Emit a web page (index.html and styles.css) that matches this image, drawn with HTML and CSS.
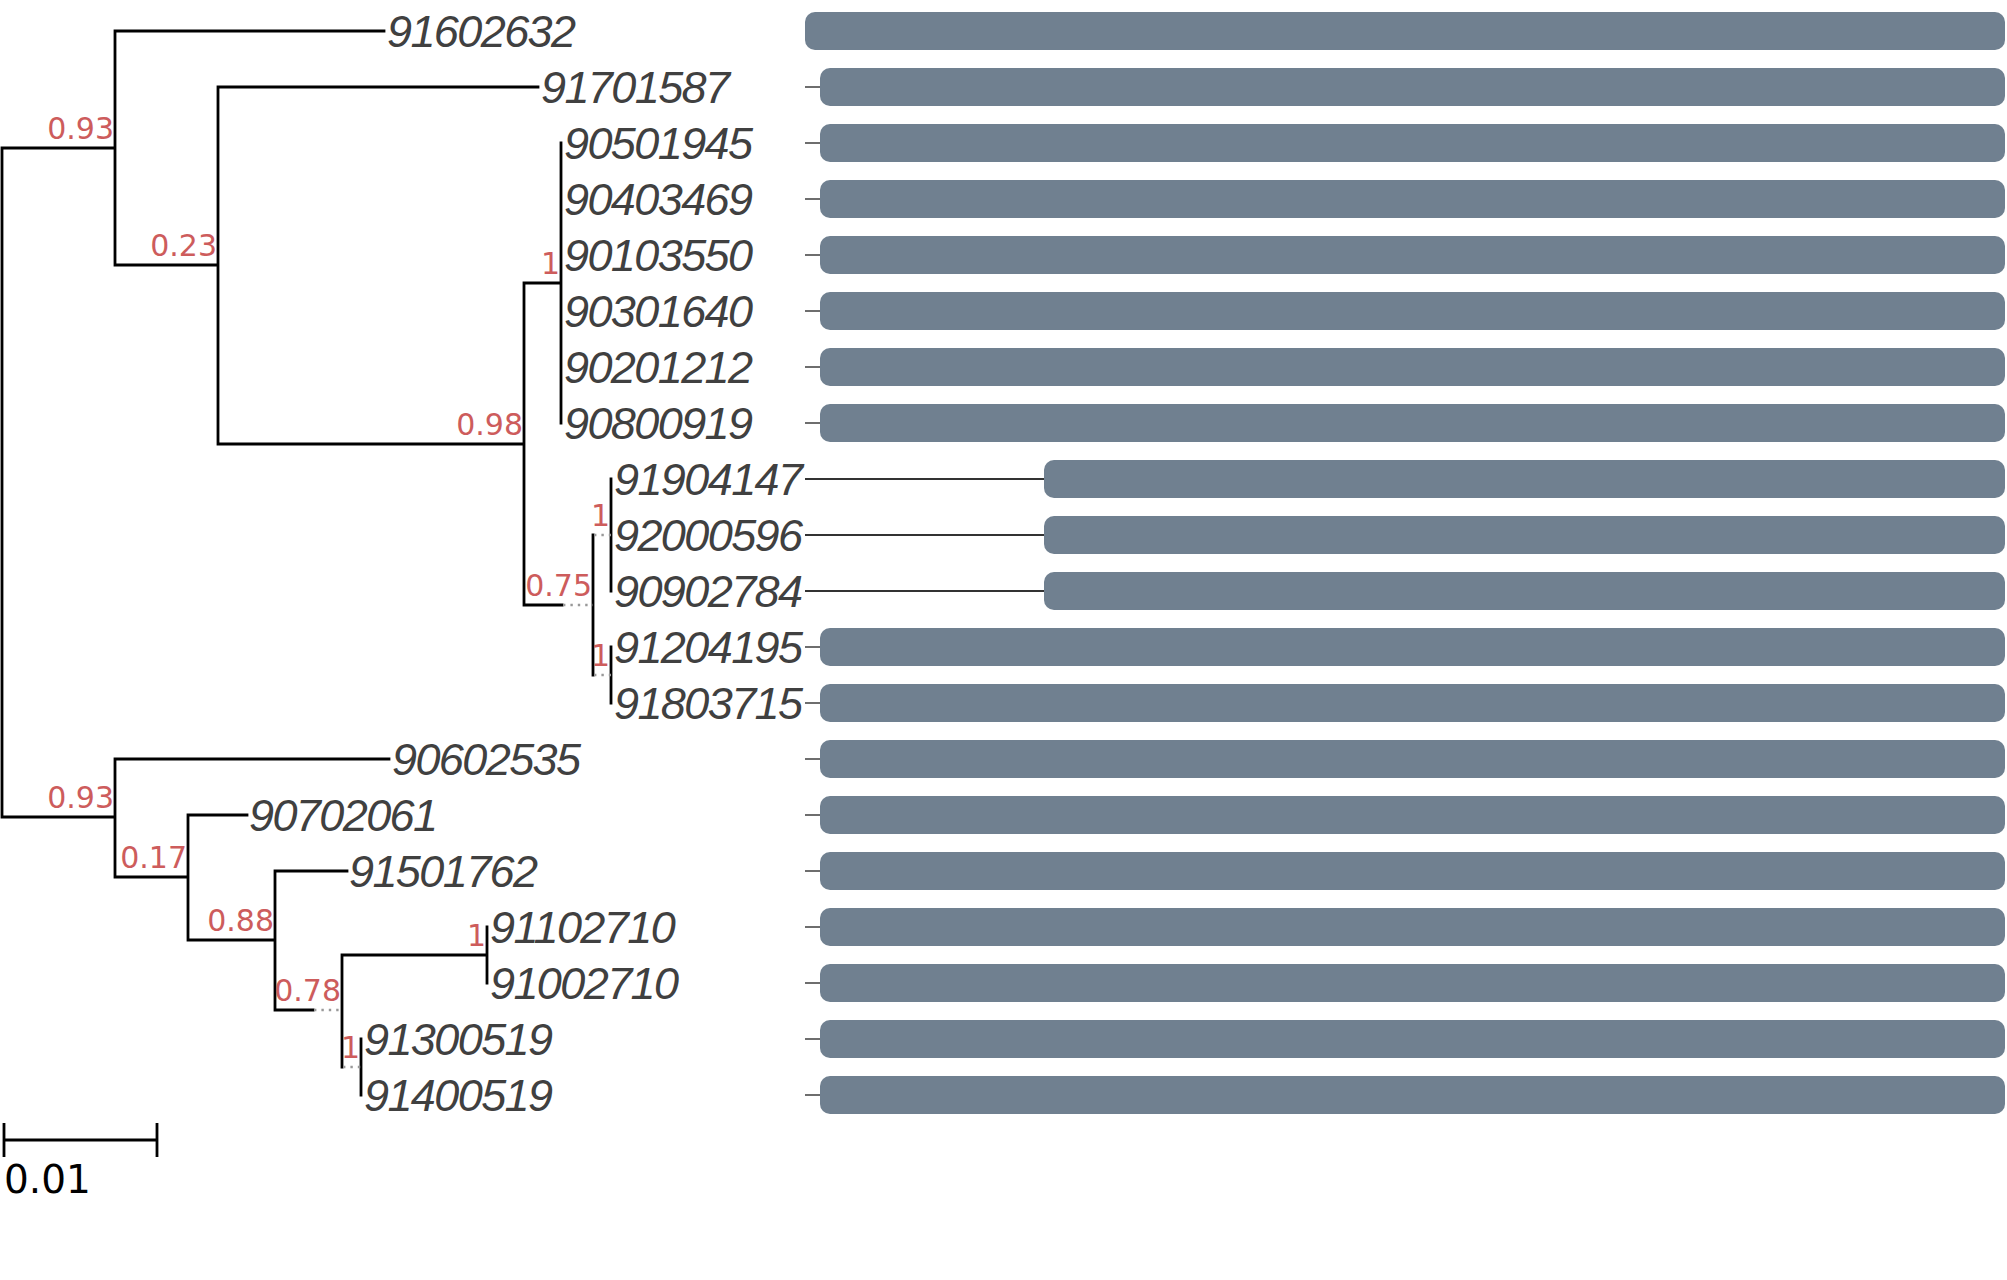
FILE: index.html
```html
<!DOCTYPE html>
<html>
<head>
<meta charset="utf-8">
<link rel="stylesheet" href="styles.css">
</head>
<body>
<div class="figure">
  <svg class="tree" width="805" height="1280" viewBox="0 0 805 1280">
    <path class="branch" d="M2 148 V817 M2 148 H115 M2 817 H115
      M115 31 V265 M115 31 H384 M115 265 H218
      M218 87 V444 M218 87 H538 M218 444 H524
      M524 283 V605 M524 283 H561 M524 605 H562
      M561 143 V423
      M593 535 V675
      M611 479 V591
      M611 647 V703
      M115 759 V877 M115 759 H389 M115 877 H188
      M188 815 V940 M188 815 H247 M188 940 H275
      M275 871 V1010 M275 871 H347 M275 1010 H313
      M342 955 V1067 M342 955 H487
      M487 927 V983
      M361 1039 V1095"/>
    <path class="dots" d="M563 605 H593 M594 535 H611 M594 675 H611 M314 1010 H342 M343 1067 H361"/>
    <path class="scale" d="M4 1140 H157 M4 1123 V1157 M157 1123 V1157"/>

    <text class="leaf" x="387" y="47">91602632</text>
    <text class="leaf" x="541" y="103">91701587</text>
    <text class="leaf" x="564" y="159">90501945</text>
    <text class="leaf" x="564" y="215">90403469</text>
    <text class="leaf" x="564" y="271">90103550</text>
    <text class="leaf" x="564" y="327">90301640</text>
    <text class="leaf" x="564" y="383">90201212</text>
    <text class="leaf" x="564" y="439">90800919</text>
    <text class="leaf" x="614" y="495">91904147</text>
    <text class="leaf" x="614" y="551">92000596</text>
    <text class="leaf" x="614" y="607">90902784</text>
    <text class="leaf" x="614" y="663">91204195</text>
    <text class="leaf" x="614" y="719">91803715</text>
    <text class="leaf" x="392" y="775">90602535</text>
    <text class="leaf" x="249" y="831">90702061</text>
    <text class="leaf" x="349" y="887">91501762</text>
    <text class="leaf" x="490" y="943">91102710</text>
    <text class="leaf" x="490" y="999">91002710</text>
    <text class="leaf" x="364" y="1055">91300519</text>
    <text class="leaf" x="364" y="1111">91400519</text>

    <text class="sup" x="114" y="139">0.93</text>
    <text class="sup" x="217" y="256">0.23</text>
    <text class="sup" x="523" y="435">0.98</text>
    <text class="sup" x="560" y="274">1</text>
    <text class="sup" x="592" y="596">0.75</text>
    <text class="sup" x="610" y="526">1</text>
    <text class="sup" x="610" y="666">1</text>
    <text class="sup" x="114" y="808">0.93</text>
    <text class="sup" x="187" y="868">0.17</text>
    <text class="sup" x="274" y="931">0.88</text>
    <text class="sup" x="341" y="1001">0.78</text>
    <text class="sup" x="486" y="946">1</text>
    <text class="sup" x="360" y="1058">1</text>

    <text class="scale-label" x="4" y="1193">0.01</text>
  </svg>

  <div class="tracks">
    <div class="track"><div class="bar"></div></div>
    <div class="track"><div class="stub"></div><div class="bar"></div></div>
    <div class="track"><div class="stub"></div><div class="bar"></div></div>
    <div class="track"><div class="stub"></div><div class="bar"></div></div>
    <div class="track"><div class="stub"></div><div class="bar"></div></div>
    <div class="track"><div class="stub"></div><div class="bar"></div></div>
    <div class="track"><div class="stub"></div><div class="bar"></div></div>
    <div class="track"><div class="stub"></div><div class="bar"></div></div>
    <div class="track"><div class="stub long"></div><div class="bar"></div></div>
    <div class="track"><div class="stub long"></div><div class="bar"></div></div>
    <div class="track"><div class="stub long"></div><div class="bar"></div></div>
    <div class="track"><div class="stub"></div><div class="bar"></div></div>
    <div class="track"><div class="stub"></div><div class="bar"></div></div>
    <div class="track"><div class="stub"></div><div class="bar"></div></div>
    <div class="track"><div class="stub"></div><div class="bar"></div></div>
    <div class="track"><div class="stub"></div><div class="bar"></div></div>
    <div class="track"><div class="stub"></div><div class="bar"></div></div>
    <div class="track"><div class="stub"></div><div class="bar"></div></div>
    <div class="track"><div class="stub"></div><div class="bar"></div></div>
    <div class="track"><div class="stub"></div><div class="bar"></div></div>
  </div>
</div>
</body>
</html>
```
FILE: styles.css
```css
html, body {
  margin: 0;
  padding: 0;
  background: #ffffff;
}

.figure {
  display: grid;
  grid-template-columns: 805px 1fr;
  width: 2007px;
  height: 1280px;
}

.tree {
  display: block;
  overflow: visible;
  position: relative;
  z-index: 1;
}

.branch {
  fill: none;
  stroke: #000000;
  stroke-width: 2.8;
  stroke-linecap: square;
}

.dots {
  fill: none;
  stroke: #999999;
  stroke-width: 2.4;
  stroke-dasharray: 2.4 5;
}

.scale {
  fill: none;
  stroke: #000000;
  stroke-width: 2.8;
}

.leaf {
  font-family: "Liberation Sans", Arial, sans-serif;
  font-style: italic;
  font-size: 45px;
  letter-spacing: -1.6px;
  fill: #404040;
}

.sup {
  font-family: "DejaVu Sans", sans-serif;
  font-size: 30px;
  fill: #cd5c5c;
  text-anchor: end;
}

.scale-label {
  font-family: "DejaVu Sans", sans-serif;
  font-size: 39px;
  fill: #000000;
}

.tracks {
  display: flex;
  flex-direction: column;
  padding: 3px 2px 0 0;
}

.track {
  display: flex;
  align-items: center;
  height: 56px;
}

.stub {
  width: 15px;
  height: 1.5px;
  background: #6e6e6e;
  flex: none;
}

.stub.long {
  width: 239px;
  background: #333333;
}

.bar {
  flex: 1;
  height: 38px;
  border-radius: 10px;
  background: #708090;
}
```
